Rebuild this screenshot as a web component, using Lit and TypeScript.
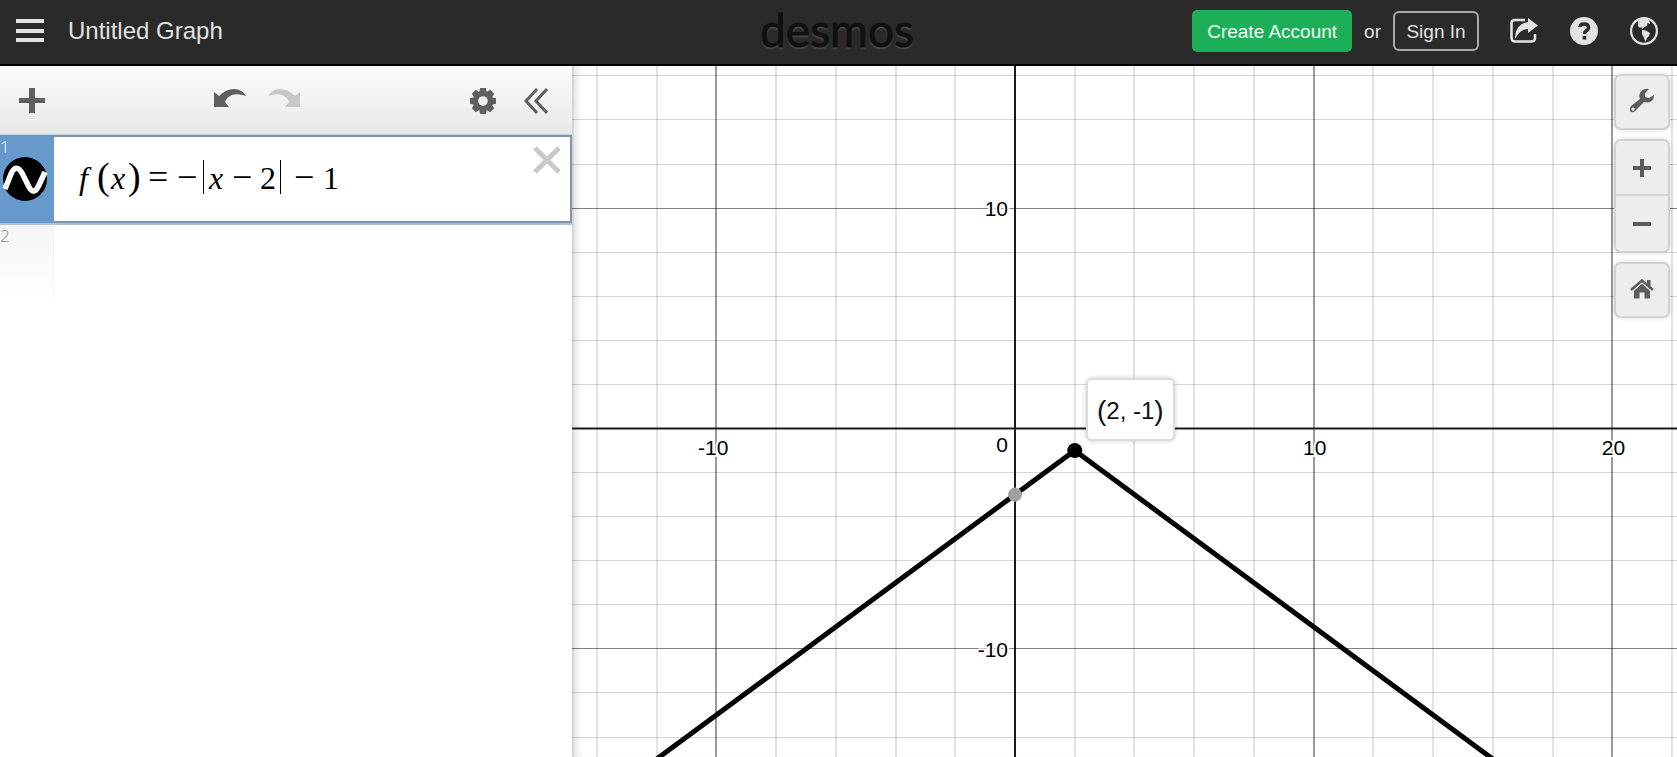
import { LitElement, html, css, svg } from "lit";
import { customElement, state } from "lit/decorators.js";

const UNIT_X = 29.87;
const UNIT_Y = 22.04;
const ORIGIN = { x: 443, y: 362.5 };
const px = (x: number) => ORIGIN.x + x * UNIT_X;
const py = (y: number) => ORIGIN.y - y * UNIT_Y;
const f = (x: number) => -Math.abs(x - 2) - 1;

@customElement("graph-paper")
export class GraphPaper extends LitElement {
  static styles = css`
    :host {
      display: block;
      position: relative;
      overflow: hidden;
      background: #fff;
      box-shadow: inset 2px 0 0 #d6d6d6, inset 10px 0 10px -6px rgba(0, 0, 0, 0.14);
    }
    .plot {
      position: absolute;
      inset: 0;
      width: 100%;
      height: 100%;
    }
    .minor { stroke: #000; stroke-opacity: 0.11; stroke-width: 2; }
    .major { stroke: #000; stroke-opacity: 0.4; stroke-width: 2; }
    .row { stroke-width: 1; stroke-opacity: 0.16; }
    .major.row { stroke-opacity: 0.5; }
    .axis { stroke: #1c1a1c; stroke-width: 2; }
    .label {
      font: 21px "Liberation Sans", Arial, sans-serif;
      fill: #000;
      stroke: #fff;
      stroke-width: 4;
      stroke-linejoin: round;
      paint-order: stroke;
    }
    .curve { fill: none; stroke: #000; stroke-width: 5; stroke-linejoin: round; }
    .tip {
      position: absolute;
      box-sizing: border-box;
      left: 514px;
      top: 312px;
      height: 63px;
      padding: 2px 9px 0;
      display: flex;
      align-items: center;
      background: #fff;
      border: 2px solid #dcdcdc;
      border-radius: 6px;
      box-shadow: 0 0 5px rgba(0, 0, 0, 0.2);
      font: 24px "Liberation Sans", Arial, sans-serif;
      color: #111;
      white-space: nowrap;
    }
    .paren { font-size: 28px; line-height: 24px; }
  `;

  render() {
    const xs: number[] = [];
    for (let i = -14; i <= 60; i += 2) if (i) xs.push(i);
    const ys: number[] = [];
    for (let i = -60; i <= 16; i += 2) if (i) ys.push(i);
    return html`
      <svg class="plot" role="img" aria-label="Graph of f(x)">
        ${xs.map((x) => svg`<line class=${x % 10 ? "minor" : "major"} x1=${Math.round(px(x))} x2=${Math.round(px(x))} y1="0" y2="100%" />`)}
        ${ys.map((y) => svg`<line class="row ${y % 10 ? "minor" : "major"}" x1="0" x2="100%" y1=${Math.floor(py(y)) + 0.5} y2=${Math.floor(py(y)) + 0.5} />`)}
        <line class="axis" x1="0" x2="100%" y1=${ORIGIN.y} y2=${ORIGIN.y} />
        <line class="axis" x1=${ORIGIN.x} x2=${ORIGIN.x} y1="0" y2="100%" />
        ${[-10, 10, 20].map((x) => svg`<text class="label" text-anchor="middle" x=${px(x) + (x < 0 ? -3 : 1)} y="389">${x}</text>`)}
        ${[-10, 10].map((y) => svg`<text class="label" text-anchor="end" x="436" y=${Math.round(py(y)) + 8}>${y}</text>`)}
        <text class="label" text-anchor="end" x="436" y="386">0</text>
        <polyline class="curve" points="${px(-20)},${py(f(-20))} ${px(2)},${py(-1)} ${px(60)},${py(f(60))}" />
        <circle cx=${px(0)} cy=${py(-3)} r="7" fill="#a0a0a0" />
        <circle cx=${px(2)} cy=${py(-1)} r="7.5" />
      </svg>
      <div class="tip"><span class="paren">(</span>2, -1<span class="paren">)</span></div>
      <slot></slot>
    `;
  }
}

@customElement("app-root")
export class AppRoot extends LitElement {
  @state() private title_ = "Untitled Graph";

  static styles = css`
    :host {
      display: flex;
      flex-direction: column;
      height: 100vh;
      overflow: hidden;
      font-family: "Liberation Sans", Arial, sans-serif;
      background: #fff;
    }
    button {
      font: inherit;
      color: inherit;
      background: none;
      border: 0;
      padding: 0;
      margin: 0;
      cursor: pointer;
    }
    svg { display: block; }
    .header {
      flex: none;
      display: grid;
      grid-template-columns: 1fr auto 1fr;
      align-items: center;
      height: 64px;
      padding: 0 19px 0 16px;
      background: #2a2a2a;
      border-bottom: 2px solid #000;
      color: #e2e2e2;
    }
    .left, .right { display: flex; align-items: center; margin-top: -2px; }
    .left { gap: 24px; font-size: 24px; }
    .right { justify-content: flex-end; font-size: 19px; }
    .logo {
      font: 400 46px/56px Lato, sans-serif;
      color: #111;
      -webkit-text-stroke: 1px #111;
      text-shadow: 0 2px 2px #505050;
      text-decoration: none;
      margin-top: -4px;
    }
    .create {
      height: 42px;
      padding: 2px 15px 0;
      border-radius: 5px;
      background: #1dae58;
      color: #f2fff6;
    }
    .or { margin: 2px 12px 0; }
    .signin {
      height: 40px;
      width: 86px;
      padding: 2px 0 0;
      border: 2px solid #aaa;
      border-radius: 6px;
    }
    .icons { display: flex; gap: 32px; margin-left: 31px; }
    .body { flex: 1; display: flex; min-height: 0; }
    .panel { width: 572px; flex: none; display: flex; flex-direction: column; }
    .graph { flex: 1; }
    .toolbar {
      display: flex;
      align-items: center;
      height: 68px;
      padding: 2px 24px 0 18px;
      box-sizing: border-box;
      background: linear-gradient(#fcfcfc, #e8e8e8);
      color: #5f5f5f;
    }
    .history { display: flex; gap: 22px; margin: -5px auto 0 168px; }
    .options { display: flex; gap: 28px; }
    .faded { color: #c8c8c8; }
    .row { display: flex; }
    .gutter { width: 54px; flex: none; box-sizing: border-box; }
    .num { font: 300 17px/18px "Open Sans", sans-serif; }
    .active {
      height: 91px;
      box-sizing: border-box;
      border-top: 1px solid #c3d3e1;
      border-bottom: 2px solid #b0c1d0;
    }
    .active .gutter { background: #6799cc; color: #fff; padding: 3px 0 0; }
    .toggle { margin: 0 0 0 2px; display: block; }
    .expr {
      flex: 1;
      display: flex;
      justify-content: space-between;
      align-items: flex-start;
      border: 2px solid #7c97ad;
      border-left: 0;
      padding: 9px 9px 0 23px;
    }
    .math {
      display: flex;
      align-items: baseline;
      margin-top: 11px;
      font: 32px/38px "Liberation Serif", serif;
      color: #000;
      outline: none;
      white-space: pre;
    }
    .math i { width: 15px; }
    .math .fn { width: 18px; padding-left: 2px; }
    .paren { font: 38px/38px "Liberation Serif", serif; width: 12px; }
    .open { margin-right: 2px; }
    .close { margin: 0 8px 0 2px; }
    .op { width: 20px; text-align: center; font-size: 36px; }
    .eq { margin-right: 9px; }
    .sub { margin: 0 8px 0 8px; }
    .after { margin: 0 9px 0 13px; }
    .bar { align-self: center; width: 1px; height: 34px; background: #000; margin: 0 5px 0 6px; }
    .end { margin-left: 4px; margin-right: 0; }
    .next .gutter {
      height: 76px;
      padding: 2px 0 0;
      color: #888;
      background: linear-gradient(#f4f4f4, #fff);
      border-right: 1px solid #f4f4f4;
    }
    .tools {
      position: absolute;
      top: 8px;
      right: 7px;
      display: flex;
      flex-direction: column;
      gap: 9px;
      color: #5c5c5c;
    }
    .card {
      background: #ededed;
      border: 2px solid #d2d2d2;
      border-radius: 7px;
      box-shadow: 0 0 5px rgba(0, 0, 0, 0.15);
    }
    .card button {
      width: 52px;
      height: 52px;
      padding-bottom: 2px;
      box-sizing: border-box;
      display: grid;
      place-items: center;
    }
    .zoom button { height: 53px; padding-bottom: 0; }
    .zoom button + button { height: 57px; border-top: 2px solid #d6d6d6; }
  `;

  render() {
    return html`
      <header class="header">
        <div class="left">
          <button aria-label="Open menu">
            <svg width="28" height="24" fill="currentColor"><path d="M0 0h28v4H0zM0 10h28v4H0zM0 19h28v4H0z" /></svg>
          </button>
          <span>${this.title_}</span>
        </div>
        <a class="logo" href="#">desmos</a>
        <div class="right">
          <button class="create">Create Account</button>
          <span class="or">or</span>
          <button class="signin">Sign In</button>
          <div class="icons">
            <button aria-label="Share">
              <svg width="28" height="28" viewBox="0 0 28 28"><path d="M15 3H5Q1.500 3 1.500 6V21Q1.500 24.500 5 24.500H21Q25 24.500 25 21V17" fill="none" stroke="currentColor" stroke-width="2.600" /><path d="M18 1L28 8.500L18 16V12Q10 12 5 22Q5 7 18 5z" fill="currentColor" /></svg>
            </button>
            <button aria-label="Help">
              <svg width="28" height="28" viewBox="0 0 28 28"><circle cx="14" cy="14" r="14" fill="currentColor" /><path d="M10 10Q10 7 14 7Q18.500 7 18.500 10.500Q18.500 12.500 16 14Q14.500 15 14.500 17" fill="none" stroke="#2a2a2a" stroke-width="3.400" /><path d="M12.700 19h3.600v3.600h-3.600z" fill="#2a2a2a" /></svg>
            </button>
            <button aria-label="Language">
              <svg width="28" height="28" viewBox="0 0 28 28"><circle cx="14" cy="14" r="12.900" fill="none" stroke="currentColor" stroke-width="2.200" /><path d="M8 3L12 1.500L19 2L20 7L17.500 6L17 9L14 10L12.500 12L11 10L10 11L8 9L8 6zM12 13L16 13.500L20 16L19 19L17 21L15.500 25L14 21L12 17z" fill="currentColor" /></svg>
            </button>
          </div>
        </div>
      </header>
      <div class="body">
        <section class="panel">
          <div class="toolbar">
            <button aria-label="Add item">
              <svg width="28" height="28" fill="currentColor"><path d="M11 1h6v10h10v5H17v10h-6V16H1v-5h10z" /></svg>
            </button>
            <div class="history">
              <button aria-label="Undo">
                <svg width="32" height="20" fill="currentColor"><path d="M0 3L5 7Q12 0 20 0Q28 0 32 7Q24 4 18 6Q13 8 11 13L15 18H0z" /></svg>
              </button>
              <button class="faded" aria-label="Redo">
                <svg width="32" height="20" fill="currentColor"><path d="M32 3L27 7Q20 0 12 0Q4 0 0 7Q8 4 14 6Q19 8 21 13L17 18H32z" /></svg>
              </button>
            </div>
            <div class="options">
              <button aria-label="Graph settings">
                <svg width="26" height="26" viewBox="-13 -13 26 26" fill="currentColor">
                  ${[0, 45, 90, 135].map((a) => svg`<path d="M-2.800 -13H2.800L4 -8V8L2.800 13H-2.800L-4 8V-8z" transform="rotate(${a})" />`)}
                  <circle r="9.800" /><circle r="4.800" fill="#f0f0f0" />
                </svg>
              </button>
              <button aria-label="Hide list">
                <svg width="24" height="26" fill="none" stroke="currentColor" stroke-width="3"><path d="M13 1L2 13L13 25M23 1L12 13L23 25" /></svg>
              </button>
            </div>
          </div>
          <div class="row active">
            <div class="gutter">
              <div class="num">1</div>
              <button class="toggle" aria-label="Hide expression 1">
                <svg width="46" height="46" viewBox="0 0 46 46"><circle cx="23" cy="23" r="22" /><path d="M3 33L9 18Q14 7 20 17L27 31Q32 40 37 29L43 16" fill="none" stroke="#fff" stroke-width="5.500" /></svg>
              </button>
            </div>
            <div class="expr">
              <div class="math" role="textbox" aria-label="Expression 1" tabindex="0"><i class="fn">f</i><span class="paren open">(</span><i>x</i><span class="paren close">)</span><span class="op eq">=</span><span class="op">−</span><span class="bar"></span><i>x</i><span class="op sub">−</span><span>2</span><span class="bar end"></span><span class="op after">−</span><span>1</span></div>
              <button aria-label="Delete expression 1">
                <svg width="28" height="28" stroke="#c9c9c9" stroke-width="5"><path d="M2 2L26 26M26 2L2 26" /></svg>
              </button>
            </div>
          </div>
          <div class="row next"><div class="gutter"><div class="num">2</div></div></div>
        </section>
        <graph-paper class="graph">
          <div class="tools">
            <div class="card">
              <button aria-label="Graph wrench">
                <svg width="26" height="26" viewBox="0 0 26 26" fill="currentColor"><path fill-rule="evenodd" d="M20 1L16 5V9L20 10L25 7Q25 14 19 14.500L15 14L6 23Q3 25.500 1 23Q0 20 2 18L11 11Q9 6 13 2.500Q16 0 20 1zM4 19.500a1.700 1.700 0 1 0 .1 0z" /></svg>
              </button>
            </div>
            <div class="card zoom">
              <button aria-label="Zoom in"><svg width="18" height="18" fill="currentColor"><path d="M7 0h4v7h7v4h-7v7H7v-7H0V7h7z" /></svg></button>
              <button aria-label="Zoom out"><svg width="18" height="4" fill="currentColor"><path d="M0 0h18v4H0z" /></svg></button>
            </div>
            <div class="card">
              <button aria-label="Default viewport">
                <svg width="24" height="20" viewBox="0 0 24 20" fill="currentColor"><path d="M12 4.500L20 12V19.500H14.500V13.500H9.500V19.500H4V12z" /><path d="M1 11L12 1.500L23 11" fill="none" stroke="currentColor" stroke-width="2.400" /><path d="M17 1h3.500v7L17 5z" /></svg>
              </button>
            </div>
          </div>
        </graph-paper>
      </div>
    `;
  }
}
